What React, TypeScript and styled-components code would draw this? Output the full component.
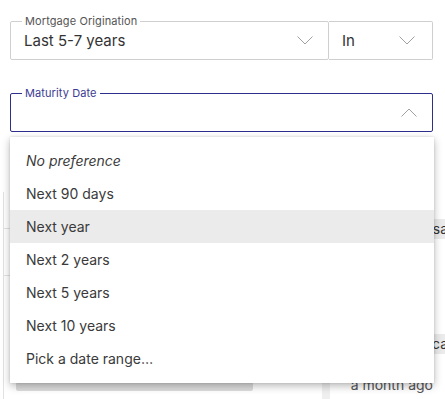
import React from 'react';
import styled, { createGlobalStyle } from 'styled-components';

const GlobalStyle = createGlobalStyle`
  html, body {
    margin: 0;
    padding: 0;
    background: #ffffff;
    font-family: Inter, "Noto Sans", sans-serif;
    -webkit-font-smoothing: antialiased;
  }
`;

const Page = styled.div`
  position: relative;
  width: 445px;
  height: 399px;
  overflow: hidden;
  box-sizing: border-box;
  padding: 15px 12px 0 10px;
`;

const FieldRow = styled.div`
  display: flex;
  align-items: flex-end;
`;

const Fieldset = styled.fieldset<{ $active?: boolean }>`
  flex: 1;
  min-width: 0;
  margin: 0;
  padding: 0 15px 0 13px;
  border: 1px solid ${p => (p.$active ? '#2e2e8c' : '#cfcfcf')};
  border-radius: 2px;
  box-sizing: border-box;
`;

const Legend = styled.legend<{ $active?: boolean }>`
  margin-left: -2px;
  padding: 0 3px;
  font-size: 11px;
  line-height: 12px;
  letter-spacing: 0.1px;
  color: ${p => (p.$active ? '#3b3b94' : '#555555')};
`;

const Inner = styled.div`
  display: flex;
  align-items: center;
  justify-content: space-between;
  height: 32px;
  padding-bottom: 1px;
  box-sizing: border-box;
`;

const Value = styled.span<{ $flat?: boolean }>`
  font-size: 15px;
  color: #333333;
  margin-top: ${p => (p.$flat ? '0' : '-4px')};
`;

const SideSelect = styled.div`
  width: 104px;
  height: 39px;
  box-sizing: border-box;
  border: 1px solid #cfcfcf;
  border-left: none;
  border-radius: 0 2px 2px 0;
  display: flex;
  align-items: center;
  justify-content: space-between;
  padding: 0 17px 0 13px;
`;

const Chevron = styled.svg<{ $up?: boolean; $flat?: boolean }>`
  width: 16px;
  height: 9px;
  flex: none;
  margin-top: ${p => (p.$flat ? '0' : '-4px')};
  transform: ${p => (p.$up ? 'rotate(180deg)' : 'none')};
`;

const MaturityWrap = styled.div`
  position: relative;
  margin-top: 27px;
`;

const Menu = styled.ul`
  position: absolute;
  z-index: 2;
  top: calc(100% + 5px);
  left: 0;
  width: 424px;
  margin: 0;
  padding: 7px 0 8px;
  list-style: none;
  background: #ffffff;
  box-shadow: 0 3px 8px rgba(0, 0, 0, 0.28), 0 0 2px rgba(0, 0, 0, 0.12);
`;

const Item = styled.li<{ $highlight?: boolean; $italic?: boolean }>`
  height: 33px;
  display: flex;
  align-items: center;
  padding-left: 16px;
  font-size: 14px;
  color: #3a3a3a;
  font-style: ${p => (p.$italic ? 'italic' : 'normal')};
  background: ${p => (p.$highlight ? '#ebebeb' : 'transparent')};
`;

const Results = styled.div`
  display: grid;
  grid-template-columns: 305px 1fr;
  margin: 60px -12px 0 -10px;
  height: 260px;
`;

const LeftPanel = styled.div`
  border-left: 1px solid #e2e2e2;
  margin-left: 3px;
  display: flex;
  flex-direction: column;
  padding-top: 36px;
`;

const Line = styled.div`
  height: 1px;
  background: #e2e2e2;
  width: 8px;
  margin-bottom: 46px;
`;

const Bar = styled.div`
  margin: 60px 0 0 12px;
  width: 237px;
  height: 9px;
  background: #dddddd;
  border-radius: 2px;
`;

const RightPanel = styled.div`
  border-left: 8px solid #efefef;
  margin-left: 17px;
  display: flex;
  flex-direction: column;
  align-items: flex-end;
  overflow: hidden;
`;

const Chip = styled.div<{ $top: number }>`
  margin-top: ${p => p.$top}px;
  height: 20px;
  width: 70px;
  overflow: hidden;
  background: #ebebeb;
  font-size: 14px;
  line-height: 20px;
  color: #333333;
  white-space: nowrap;
  text-align: right;
  direction: rtl;
  margin-right: -3px;
`;

const Ago = styled.div`
  margin-top: 22px;
  margin-right: 12px;
  font-size: 14px;
  line-height: 18px;
  color: #555555;
  white-space: nowrap;
`;

const ChevronIcon = ({ up, flat }: { up?: boolean; flat?: boolean }) => (
  <Chevron $up={up} $flat={flat} viewBox="0 0 16 9">
    <polyline points="0.5,0.5 8,8 15.5,0.5" fill="none" stroke="#a0a0a0" strokeWidth="1" />
  </Chevron>
);

const options = [
  'No preference',
  'Next 90 days',
  'Next year',
  'Next 2 years',
  'Next 5 years',
  'Next 10 years',
  'Pick a date range…',
];

export default function App() {
  return (
    <>
      <GlobalStyle />
      <Page>
        <FieldRow>
          <Fieldset>
            <Legend>Mortgage Origination</Legend>
            <Inner>
              <Value>Last 5-7 years</Value>
              <ChevronIcon />
            </Inner>
          </Fieldset>
          <SideSelect>
            <Value $flat>In</Value>
            <ChevronIcon flat />
          </SideSelect>
        </FieldRow>

        <MaturityWrap>
          <Fieldset $active>
            <Legend $active>Maturity Date</Legend>
            <Inner>
              <Value />
              <ChevronIcon up />
            </Inner>
          </Fieldset>
          <Menu>
            {options.map((o, i) => (
              <Item key={o} $italic={i === 0} $highlight={i === 2}>
                {o}
              </Item>
            ))}
          </Menu>
        </MaturityWrap>

        <Results>
          <LeftPanel>
            <Line />
            <Line />
            <Bar />
          </LeftPanel>
          <RightPanel>
            <Chip $top={27}>Visa</Chip>
            <Chip $top={95}>Jessica</Chip>
            <Ago>a month ago</Ago>
          </RightPanel>
        </Results>
      </Page>
    </>
  );
}
